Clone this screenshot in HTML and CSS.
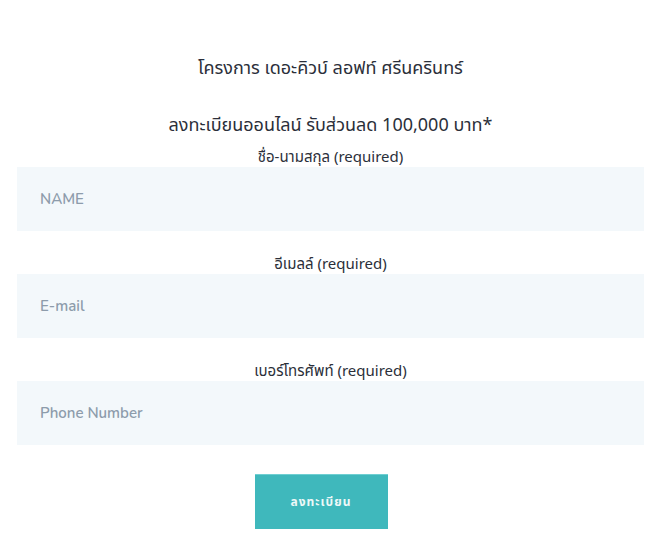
FILE: index.html
```html
<!DOCTYPE html>
<html lang="th">
<head>
<meta charset="utf-8">
<title>ลงทะเบียน</title>
<link rel="stylesheet" href="styles.css">
</head>
<body>
<main class="page">
  <h1 class="title">โครงการ เดอะคิวบ์ ลอฟท์ ศรีนครินทร์</h1>
  <h2 class="subtitle">ลงทะเบียนออนไลน์ รับส่วนลด 100,000 บาท*</h2>
  <form class="form">
    <div class="field">
      <label class="label" for="name">ชื่อ-นามสกุล (required)</label>
      <input class="input" id="name" type="text" placeholder="NAME">
    </div>
    <div class="field">
      <label class="label" for="email">อีเมลล์ (required)</label>
      <input class="input" id="email" type="email" placeholder="E-mail">
    </div>
    <div class="field">
      <label class="label" for="phone">เบอร์โทรศัพท์ (required)</label>
      <input class="input" id="phone" type="tel" placeholder="Phone Number">
    </div>
    <div class="actions">
      <button class="submit" type="button">ลงทะเบียน</button>
    </div>
  </form>
</main>
</body>
</html>
```
FILE: styles.css
```css
html, body {
  margin: 0;
  padding: 0;
  background: #ffffff;
}
body {
  font-family: "Noto Sans", "Noto Sans Thai", "DejaVu Sans", sans-serif;
  color: #2b2f3a;
}
.page {
  padding: 52px 19px 0 17px;
}
.title {
  margin: 0;
  text-align: center;
  font-size: 18px;
  font-weight: 400;
  line-height: 30px;
}
.subtitle {
  margin: 27px 0 0;
  text-align: center;
  font-size: 18px;
  font-weight: 400;
  line-height: 30px;
}
.form {
  display: flex;
  flex-direction: column;
  margin-top: 6px;
}
.field {
  display: flex;
  flex-direction: column;
  margin-bottom: 21px;
}
.label {
  text-align: center;
  font-size: 15px;
  line-height: 22px;
}
.input {
  box-sizing: border-box;
  height: 64px;
  border: 0;
  background: #f3f8fb;
  padding: 0 23px;
  font-family: "Nunito", "Noto Sans", sans-serif;
  font-size: 15px;
  font-weight: 600;
  color: #2b2f3a;
  outline: none;
}
.input::placeholder {
  color: #8d9cab;
  opacity: 1;
}
.actions {
  display: flex;
  justify-content: center;
  margin-top: 8px;
  padding-right: 19px;
}
.submit {
  width: 133px;
  height: 55px;
  border: 0;
  border-top: 1px solid #6fcfd2;
  background: #3fb8bc;
  color: #eef8f8;
  font-family: "Noto Sans", "Noto Sans Thai", sans-serif;
  font-size: 12px;
  font-weight: 700;
  letter-spacing: 1px;
}
```
